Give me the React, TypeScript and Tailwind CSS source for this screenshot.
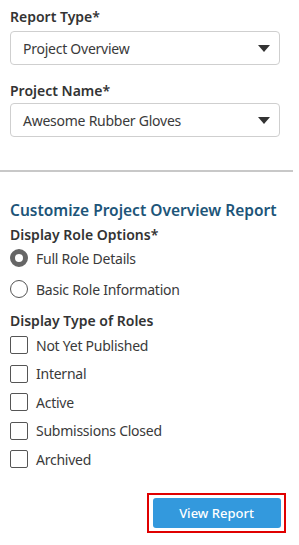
import React from "react";

function Caret() {
  return (
    <svg width="12" height="7" viewBox="0 0 12 7" className="shrink-0">
      <path d="M0 0h12L6 7z" fill="#333333" />
    </svg>
  );
}

function Select({ value }: { value: string }) {
  return (
    <div className="h-[34px] w-[270px] flex items-center justify-between pl-[12px] pr-[9px] border border-[#cfcfcf] rounded-[4px] bg-white">
      <span className="text-[14px] tracking-[-0.25px] text-[#3a3a3a]">{value}</span>
      <Caret />
    </div>
  );
}

function Radio({ label, checked }: { label: string; checked?: boolean }) {
  return (
    <label className="flex items-center gap-[8px] h-[18px]">
      <span
        className={
          checked
            ? "w-[18px] h-[18px] rounded-full border-[5px] border-[#666666] bg-white shrink-0"
            : "w-[18px] h-[18px] rounded-full border border-[#555555] bg-white shrink-0"
        }
      />
      <span className="text-[14px] tracking-[-0.25px] text-[#3a3a3a]">{label}</span>
    </label>
  );
}

function Check({ label }: { label: string }) {
  return (
    <label className="flex items-center gap-[8px] h-[18px]">
      <span className="w-[18px] h-[18px] rounded-[2px] border border-[#555555] bg-white shrink-0" />
      <span className="text-[14px] tracking-[-0.25px] text-[#3a3a3a]">{label}</span>
    </label>
  );
}

export default function App() {
  const roles = ["Not Yet Published", "Internal", "Active", "Submissions Closed", "Archived"];
  return (
    <div className="w-[299px] h-[545px] bg-white font-['Noto_Sans',sans-serif] overflow-hidden">
      <div className="px-[10px] pt-[8px]">
        <div className="text-[14px] font-semibold text-[#333333] leading-[18px]">Report Type*</div>
        <div className="mt-[5px]">
          <Select value="Project Overview" />
        </div>
        <div className="mt-[17px] text-[14px] font-semibold text-[#333333] leading-[18px]">Project Name*</div>
        <div className="mt-[3px]">
          <Select value="Awesome Rubber Gloves" />
        </div>
      </div>

      <div className="mt-[33px] w-[293px] h-[2px] bg-[#c8c8c8]" />

      <div className="px-[10px] pt-[28px]">
        <div className="text-[15.5px] font-semibold text-[#1d5579] leading-[20px]">Customize Project Overview Report</div>
        <div className="mt-[6px] text-[14px] font-semibold text-[#333333] leading-[18px]">Display Role Options*</div>
        <div className="mt-[5px] flex flex-col gap-[13px]">
          <Radio label="Full Role Details" checked />
          <Radio label="Basic Role Information" />
        </div>
        <div className="mt-[14px] text-[14px] font-semibold text-[#333333] leading-[18px]">Display Type of Roles</div>
        <div className="mt-[6px] flex flex-col gap-[10.6px]">
          {roles.map((r) => (
            <Check key={r} label={r} />
          ))}
        </div>
        <div className="mt-[25px] flex justify-end pr-[3px]">
          <div className="border-2 border-[#e00000] px-[3.5px] py-[3px]">
            <button className="w-[128px] h-[30px] rounded-[3px] bg-[#3399dd] text-white text-[13px] font-medium">
              View Report
            </button>
          </div>
        </div>
      </div>
    </div>
  );
}
